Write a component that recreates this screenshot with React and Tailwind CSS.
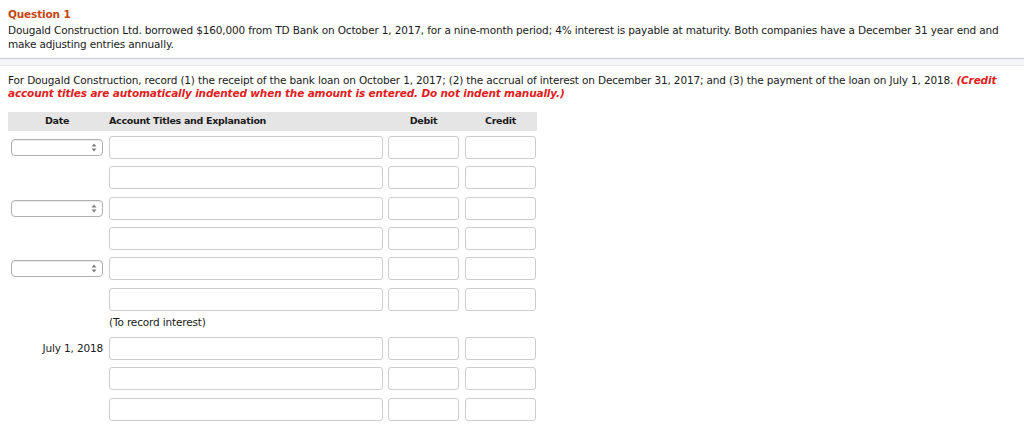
import React from 'react'

const rows = [
  { date: 'select', gap: 'mt-[5px]' },
  { date: null, gap: 'mt-[7px]' },
  { date: 'select', gap: 'mt-[8px]' },
  { date: null, gap: 'mt-[7px]' },
  { date: 'select', gap: 'mt-[7px]' },
  { date: null, gap: 'mt-[8px]' },
]

const rows2 = [
  { date: 'July 1, 2018', gap: 'mt-[8px]' },
  { date: null, gap: 'mt-[7px]' },
  { date: null, gap: 'mt-[8px]' },
]

function DateSelect() {
  return (
    <div className="ml-[3px] w-[92px] h-[17px] rounded-[4px] border border-[#b0b0b0] bg-white shadow-[inset_0_1px_1px_rgba(0,0,0,0.08)] flex items-center justify-end pr-[5px]">
      <svg width="6" height="9" viewBox="0 0 6 9">
        <path d="M3 0.5 L5.5 3.5 L0.5 3.5 Z" fill="#808080" />
        <path d="M3 8.5 L5.5 5.5 L0.5 5.5 Z" fill="#808080" />
      </svg>
    </div>
  )
}

function Field({ w }) {
  return <div className={`${w} h-[23px] rounded-[3px] border border-[#cdcdcd] bg-white`} />
}

function JournalRow({ date, gap }) {
  return (
    <div className={`flex items-center h-[23px] ${gap}`}>
      <div className="w-[98px] shrink-0 flex items-center justify-end">
        {date === 'select' ? (
          <div className="w-full"><DateSelect /></div>
        ) : date ? (
          <span className="pr-[3px]">{date}</span>
        ) : null}
      </div>
      <div className="ml-[3px]"><Field w="w-[274px]" /></div>
      <div className="ml-[5px]"><Field w="w-[71px]" /></div>
      <div className="ml-[6px]"><Field w="w-[71px]" /></div>
    </div>
  )
}

export default function App() {
  return (
    <div className="w-[1024px] h-[424px] bg-white overflow-hidden text-[10.5px] tracking-[-0.15px] text-[#1a1a1a] font-['DejaVu_Sans',Verdana,sans-serif]">
      <div className="px-2 pt-[7px]">
        <h2 className="font-bold text-[#c4470f] leading-[14px]">Question 1</h2>
        <p className="mt-[2px] leading-[14px] whitespace-nowrap">
          Dougald Construction Ltd. borrowed $160,000 from TD Bank on October 1, 2017, for a nine-month period; 4% interest is payable at maturity. Both companies have a December 31 year end and
          <br />
          make adjusting entries annually.
        </p>
      </div>

      <div className="mt-[7px] h-[8px] border-t border-b border-t-[#c5cad6] border-b-[#e4e6eb] bg-[#f4f5f8]" />

      <div className="px-2 pt-[8px]">
        <p className="leading-[13px] whitespace-nowrap">
          For Dougald Construction, record (1) the receipt of the bank loan on October 1, 2017; (2) the accrual of interest on December 31, 2017; and (3) the payment of the loan on July 1, 2018.{' '}
          <span className="font-bold italic text-[#e0201b]">(Credit</span>
          <br />
          <span className="font-bold italic text-[#e0201b]">
            account titles are automatically indented when the amount is entered. Do not indent manually.)
          </span>
        </p>

        <div className="mt-[12px] w-[529px] h-[19px] bg-[#e5e5e5] flex items-center text-[9.5px] tracking-[-0.3px] font-bold">
          <div className="w-[98px] text-center">Date</div>
          <div className="ml-[3px] w-[274px]">Account Titles and Explanation</div>
          <div className="ml-[5px] w-[71px] text-center">Debit</div>
          <div className="ml-[6px] w-[71px] text-center">Credit</div>
        </div>

        {rows.map((r, i) => (
          <JournalRow key={i} date={r.date} gap={r.gap} />
        ))}

        <div className="mt-[4px] ml-[101px] leading-[14px]">(To record interest)</div>

        {rows2.map((r, i) => (
          <JournalRow key={i} date={r.date} gap={r.gap} />
        ))}
      </div>
    </div>
  )
}
